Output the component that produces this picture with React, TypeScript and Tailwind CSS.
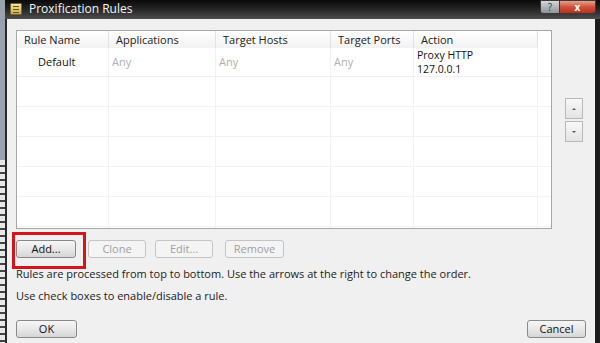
import React from "react";

const cols = [
  { name: "Rule Name", w: "w-[92px]" },
  { name: "Applications", w: "w-[107px]" },
  { name: "Target Hosts", w: "w-[115px]" },
  { name: "Target Ports", w: "w-[83px]" },
  { name: "Action", w: "w-[124px]" },
];

function Btn({ label, disabled, className = "" }: { label: string; disabled?: boolean; className?: string }) {
  return (
    <div
      className={
        "h-[18px] rounded-[3px] border flex items-center justify-center text-[11px] " +
        (disabled
          ? "border-[#c4c4c4] bg-[#f4f4f4] text-[#a0a0a0] "
          : "border-[#8a8a8a] bg-gradient-to-b from-[#f6f6f6] via-[#e8e8e8] to-[#d6d6d6] text-[#111] ") +
        className
      }
    >
      {label}
    </div>
  );
}

export default function App() {
  const rows = [0, 1, 2, 3, 4, 5];
  return (
    <div className="w-[600px] h-[343px] overflow-hidden flex bg-[#f0f0f0]" style={{ fontFamily: '"Open Sans", "Noto Sans", sans-serif' }}>
      {/* what shows behind the window */}
      <div className="w-[5px] bg-[#b8bcc2] flex flex-col">
        <div className="h-[160px] bg-[#9aa3ad]" />
        <div className="flex-1 bg-[repeating-linear-gradient(180deg,#e8e8e8_0,#e8e8e8_5px,#444_5px,#444_7px)]" />
      </div>
      <div className="flex-1 flex flex-col">
        {/* title bar */}
        <div className="h-[19px] bg-gradient-to-b from-[#0a0a0a] via-[#262626] to-[#4f4f4f] flex items-start relative">
          <div className="ml-[5px] mt-[3px] w-[12px] h-[12px] bg-gradient-to-b from-[#f3e3a0] to-[#c9a94a] border border-[#7a6328] rounded-[1px] flex flex-col justify-center gap-[2px] px-[2px]">
            <div className="h-[1px] bg-[#6b5520]" />
            <div className="h-[1px] bg-[#6b5520]" />
            <div className="h-[1px] bg-[#6b5520]" />
          </div>
          <div className="ml-[7px] mt-[1px] text-[12px] leading-[16px] text-[#f4f4f4]">Proxification Rules</div>
          <div className="absolute right-[4px] top-0 flex">
            <div className="w-[20px] h-[14px] rounded-bl-[3px] border border-[#3a3a3a] bg-gradient-to-b from-[#d3d8dd] to-[#8d949c] flex items-center justify-center text-[10px] leading-none text-[#333]">?</div>
            <div className="w-[36px] h-[14px] rounded-br-[3px] border border-l-0 border-[#3a3a3a] bg-gradient-to-b from-[#e8a08a] via-[#d0503a] to-[#b8321f] flex items-center justify-center text-[10px] font-bold leading-none text-white">x</div>
          </div>
        </div>
        {/* body */}
        <div className="flex-1 flex border-l-2 border-r-[5px] border-l-[#2a2a2a] border-r-[#1e1e1e]">
          <div className="flex-1 flex flex-col pl-[9px] pt-[11px]">
            <div className="flex items-start">
              <div className="w-[536px] h-[199px] border border-[#a8a8a8] bg-white flex flex-col overflow-hidden">
                <div className="flex h-[17px] shrink-0 text-[11px] text-[#222]">
                  {cols.map((c) => (
                    <div key={c.name} className={c.w + " border-r border-[#e2e2e2] bg-gradient-to-b from-white to-[#f2f2f2] px-[7px] leading-[17px]"}>
                      {c.name}
                    </div>
                  ))}
                  <div className="flex-1 bg-white" />
                </div>
                <div className="flex h-[29px] shrink-0 border-b border-[#f0f0f0] text-[11px]">
                  <div className="w-[92px] border-r border-[#f2f2f2] pl-[21px] pt-[6px] text-[#111]">Default</div>
                  <div className="w-[107px] border-r border-[#f2f2f2] pl-[3px] pt-[6px] text-[#b0b0b0]">Any</div>
                  <div className="w-[115px] border-r border-[#f2f2f2] pl-[3px] pt-[6px] text-[#b0b0b0]">Any</div>
                  <div className="w-[83px] border-r border-[#f2f2f2] pl-[3px] pt-[6px] text-[#b0b0b0]">Any</div>
                  <div className="w-[124px] border-r border-[#f2f2f2] pl-[3px] text-[10.5px] leading-[14px] pt-0 text-[#111]">
                    <div>Proxy HTTP</div>
                    <div>127.0.0.1</div>
                  </div>
                </div>
                {rows.map((r) => (
                  <div key={r} className="flex h-[30px] border-b border-[#f2f2f2] shrink-0">
                    <div className="w-[92px] border-r border-[#f2f2f2]" />
                    <div className="w-[107px] border-r border-[#f2f2f2]" />
                    <div className="w-[115px] border-r border-[#f2f2f2]" />
                    <div className="w-[83px] border-r border-[#f2f2f2]" />
                    <div className="w-[124px] border-r border-[#f2f2f2]" />
                  </div>
                ))}
              </div>
              <div className="ml-[13px] mt-[68px] flex flex-col gap-[2px]">
                <div className="w-[18px] h-[21px] border border-[#b8b8b8] bg-gradient-to-b from-[#f8f8f8] to-[#e4e4e4] flex items-center justify-center">
                  <div className="w-0 h-0 border-l-[2px] border-r-[2px] border-b-[2px] border-l-transparent border-r-transparent border-b-[#555]" />
                </div>
                <div className="w-[18px] h-[21px] border border-[#b8b8b8] bg-gradient-to-b from-[#f8f8f8] to-[#e4e4e4] flex items-center justify-center">
                  <div className="w-0 h-0 border-l-[2px] border-r-[2px] border-t-[2px] border-l-transparent border-r-transparent border-t-[#555]" />
                </div>
              </div>
            </div>
            <div className="flex mt-[11px] relative">
              <div className="absolute left-[-4px] top-[-8px] w-[74px] h-[37px] border-[3px] border-[#d4141a]" />
              <Btn label="Add..." className="w-[60px] border-[#3c7fb1] from-[#eaf6fd] via-[#d9f0fc] to-[#a7d9f5]" />
              <Btn label="Clone" disabled className="w-[58px] ml-[12px]" />
              <Btn label="Edit..." disabled className="w-[58px] ml-[9px]" />
              <Btn label="Remove" disabled className="w-[59px] ml-[12px]" />
            </div>
            <div className="mt-[9px] text-[11px] leading-[14px] text-[#222]">
              Rules are processed from top to bottom. Use the arrows at the right to change the order.
            </div>
            <div className="mt-[8px] text-[11px] leading-[14px] text-[#222]">Use check boxes to enable/disable a rule.</div>
            <div className="flex mt-[17px] pr-[9px] justify-between">
              <Btn label="OK" className="w-[61px]" />
              <Btn label="Cancel" className="w-[59px]" />
            </div>
          </div>
        </div>
      </div>
    </div>
  );
}
